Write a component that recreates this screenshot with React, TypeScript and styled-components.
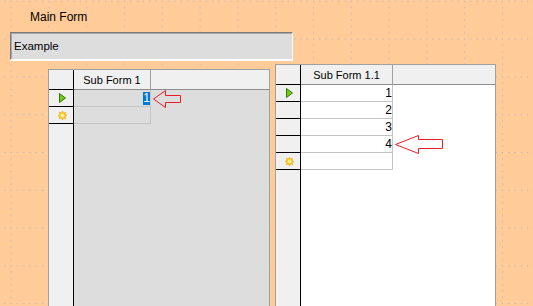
import React from "react";
import styled, { createGlobalStyle } from "styled-components";

interface Row {
	value?: string;
	marker?: "current" | "new";
	selected?: boolean;
}

const GlobalStyle = createGlobalStyle`
	html, body {
		margin: 0;
		padding: 0;
	}
	body {
		width: 533px;
		height: 306px;
		overflow: hidden;
		background: #ffcc99;
		font-family: "Liberation Sans", Arial, sans-serif;
		color: #000;
	}
`;

const GRID = 37.8;
const STEP = GRID / 6;

const GridDots = () => {
	const dots = [0, 1, 2, 3, 4, 5];
	return (
		<Backdrop width={533} height={306}>
			<defs>
				<pattern id="formgrid" patternUnits="userSpaceOnUse" x={10.6} y={0.8} width={GRID} height={GRID}>
					{dots.map((i) => (
						<rect key={`h${i}`} x={i * STEP} y={0} width={1} height={1} fill="#aab0c6" />
					))}
					{dots.slice(1).map((i) => (
						<rect key={`v${i}`} x={0} y={i * STEP} width={1} height={1} fill="#aab0c6" />
					))}
				</pattern>
			</defs>
			<rect width="533" height="306" fill="url(#formgrid)" shapeRendering="crispEdges" />
		</Backdrop>
	);
};

const PlayIcon = () => (
	<svg width="7" height="10" viewBox="0 0 7 10">
		<polygon points="0.5,0.5 6.5,5 0.5,9.5" fill="#74c81e" stroke="#2f8000" strokeWidth="1" />
	</svg>
);

const NewIcon = () => {
	const pts: string[] = [];
	for (let i = 0; i < 16; i++) {
		const r = i % 2 === 0 ? 4.4 : 2.5;
		const a = (Math.PI * i) / 8;
		pts.push(`${(4.5 + r * Math.cos(a)).toFixed(2)},${(4.5 + r * Math.sin(a)).toFixed(2)}`);
	}
	return (
		<svg width="9" height="9" viewBox="0 0 9 9">
			<polygon points={pts.join(" ")} fill="#ffd84a" stroke="#f0a800" strokeWidth="0.8" />
			<circle cx="4.5" cy="4.5" r="1.6" fill="#fff3a8" />
		</svg>
	);
};

interface SubFormProps {
	title: string;
	width: number;
	cellWidth: number;
	offset: number;
	readOnly?: boolean;
	rows: Array<Row>;
}

const SubForm = ({ title, width, cellWidth, offset, readOnly, rows }: SubFormProps) => {
	const fill = readOnly ? "#dddddd" : "#ffffff";
	return (
		<FormBox $width={width} $offset={offset} $fill={fill}>
			<HeaderRow>
				<Corner />
				<HeaderCell $width={cellWidth}>{title}</HeaderCell>
				<HeaderRest />
			</HeaderRow>
			{rows.map((r, i) => (
				<DataRow key={i}>
					<Marker>
						{r.marker === "current" && <PlayIcon />}
						{r.marker === "new" && <NewIcon />}
					</Marker>
					<Cell $width={cellWidth} $line={readOnly ? "#c6c6c6" : "#c4c4c4"}>
						{r.value && <Value $selected={r.selected}>{r.value}</Value>}
					</Cell>
				</DataRow>
			))}
			<RestRow>
				<RestMarker />
			</RestRow>
		</FormBox>
	);
};

const App = () => {
	return (
		<>
			<GlobalStyle />
			<Page>
				<GridDots />
				<Content>
					<Title>Main Form</Title>
					<TextBox>Example</TextBox>
					<FormsRow>
						<SubForm
							title="Sub Form 1"
							width={222}
							cellWidth={77}
							offset={5}
							readOnly
							rows={[{ value: "1", marker: "current", selected: true }, { marker: "new" }]}
						/>
						<SubForm
							title="Sub Form 1.1"
							width={221}
							cellWidth={92}
							offset={0}
							rows={[
								{ value: "1", marker: "current" },
								{ value: "2" },
								{ value: "3" },
								{ value: "4" },
								{ marker: "new" },
							]}
						/>
					</FormsRow>
				</Content>
				<Arrow $x={153} $y={90} width={29} height={19}>
					<polygon points="0.5,9 12.5,0.5 12.5,5.5 27.5,5.5 27.5,12.5 12.5,12.5 12.5,17.5" />
				</Arrow>
				<Arrow $x={395} $y={135} width={49} height={20}>
					<polygon points="0.5,9.5 23.5,0.5 23.5,4.5 47.5,4.5 47.5,13.5 23.5,13.5 23.5,18.5" />
				</Arrow>
			</Page>
		</>
	);
};

const Page = styled.div`
	position: relative;
	width: 533px;
	height: 306px;
	overflow: hidden;
`;

const Backdrop = styled.svg`
	position: absolute;
	left: 0;
	top: 0;
`;

const Content = styled.div`
	position: relative;
	padding-top: 10px;
`;

const Title = styled.div`
	margin-left: 30px;
	height: 14px;
	font-size: 12px;
	line-height: 14px;
`;

const TextBox = styled.div`
	margin: 8px 0 0 10px;
	width: 283px;
	height: 28px;
	box-sizing: border-box;
	display: flex;
	align-items: center;
	padding-left: 3px;
	background: #dddddd;
	border: 1px solid;
	border-color: #7a7a7a #ffffff #ffffff #7a7a7a;
	box-shadow: inset 1px 1px 0 #a8a8a8, 0 1px 0 #ffffff;
	font-size: 11.5px;
`;

const FormsRow = styled.div`
	display: flex;
	align-items: flex-start;
	gap: 5px;
	margin: 4px 0 0 48px;
`;

const FormBox = styled.div<{ $width: number; $offset: number; $fill: string }>`
	width: ${({ $width }) => $width}px;
	margin-top: ${({ $offset }) => $offset}px;
	height: 260px;
	box-sizing: border-box;
	display: flex;
	flex-direction: column;
	border: 1px solid #a0a0a0;
	background: ${({ $fill }) => $fill};
`;

const HeaderRow = styled.div`
	display: flex;
	height: 20px;
	flex-shrink: 0;
	background: #f0f0f0;
`;

const Corner = styled.div`
	width: 25px;
	box-sizing: border-box;
	border-right: 1px solid #000;
	border-bottom: 1px solid #000;
`;

const HeaderCell = styled.div<{ $width: number }>`
	width: ${({ $width }) => $width}px;
	box-sizing: border-box;
	display: flex;
	align-items: center;
	justify-content: center;
	border-right: 1px solid #a0a0a0;
	border-bottom: 1px solid #8c8c8c;
	font-size: 11px;
	padding-top: 1px;
`;

const HeaderRest = styled.div`
	flex: 1;
	border-bottom: 1px solid #8c8c8c;
`;

const DataRow = styled.div`
	display: flex;
	height: 17px;
	flex-shrink: 0;
`;

const Marker = styled.div`
	width: 25px;
	box-sizing: border-box;
	display: flex;
	align-items: center;
	justify-content: center;
	padding-left: 2px;
	background: #f0f0f0;
	border-right: 1px solid #000;
	border-bottom: 1px solid #000;
`;

const Cell = styled.div<{ $width: number; $line: string }>`
	width: ${({ $width }) => $width}px;
	box-sizing: border-box;
	display: flex;
	align-items: center;
	justify-content: flex-end;
	border-right: 1px solid ${({ $line }) => $line};
	border-bottom: 1px solid ${({ $line }) => $line};
	font-size: 12px;
`;

const Value = styled.span<{ $selected?: boolean }>`
	line-height: 13px;
	background: ${({ $selected }) => ($selected ? "#0078d7" : "transparent")};
	color: ${({ $selected }) => ($selected ? "#ffffff" : "#000000")};
`;

const RestRow = styled.div`
	flex: 1;
	display: flex;
`;

const RestMarker = styled.div`
	width: 25px;
	box-sizing: border-box;
	background: #f0f0f0;
	border-right: 1px solid #000;
`;

const Arrow = styled.svg<{ $x: number; $y: number }>`
	position: absolute;
	left: ${({ $x }) => $x}px;
	top: ${({ $y }) => $y}px;
	pointer-events: none;

	polygon {
		fill: none;
		stroke: #e81c24;
		stroke-width: 1;
	}
`;

export default App;
